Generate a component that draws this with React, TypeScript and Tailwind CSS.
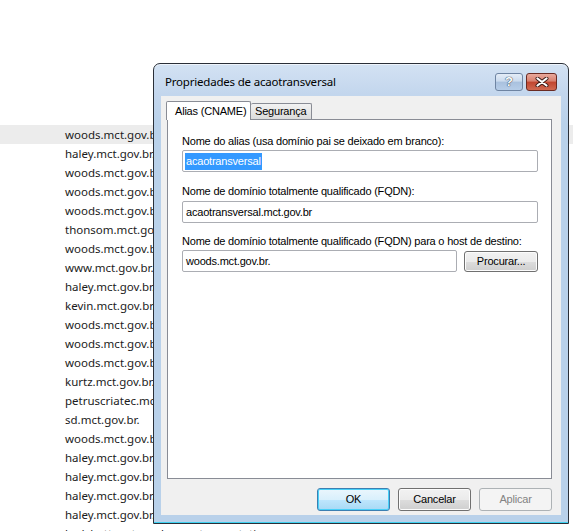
import React from "react";

const HOSTS = [
  "woods.mct.gov.br.",
  "haley.mct.gov.br.",
  "woods.mct.gov.br.",
  "woods.mct.gov.br.",
  "woods.mct.gov.br.",
  "thonsom.mct.gov.br.",
  "woods.mct.gov.br.",
  "www.mct.gov.br.",
  "haley.mct.gov.br.",
  "kevin.mct.gov.br.",
  "woods.mct.gov.br.",
  "woods.mct.gov.br.",
  "woods.mct.gov.br.",
  "kurtz.mct.gov.br.",
  "petruscriatec.mct.gov.br.",
  "sd.mct.gov.br.",
  "woods.mct.gov.br.",
  "haley.mct.gov.br.",
  "haley.mct.gov.br.",
  "haley.mct.gov.br.",
  "haley.mct.gov.br.",
  "hsdchatt.mct.gov.br.acaotransvstatic",
];

const dlgFont = "font-['Liberation_Sans',Arial,sans-serif] text-[11px] tracking-[-0.2px]";
const uiFont = "font-['Noto_Sans','Open_Sans',sans-serif] text-[11.5px]";

function WinButton({
  children,
  primary,
  disabled,
  className = "",
}: {
  children: React.ReactNode;
  primary?: boolean;
  disabled?: boolean;
  className?: string;
}) {
  const base = disabled
    ? "border-[#adb2b5] bg-[#f4f4f4] text-[#838383]"
    : primary
      ? "border-[#3c7fb1] bg-[linear-gradient(#eaf6fd_0%,#d9f0fc_50%,#bee6fd_51%,#a7d9f5_100%)] text-black shadow-[inset_0_0_0_1px_#48d0f8]"
      : "border-[#707070] bg-[linear-gradient(#f2f2f2_0%,#ebebeb_50%,#dddddd_51%,#cfcfcf_100%)] text-black shadow-[inset_0_0_0_1px_#fcfcfc]";
  return (
    <div
      className={`flex items-center justify-center rounded-[3px] border ${base} ${dlgFont} ${className}`}
    >
      {children}
    </div>
  );
}

function Field({ value, selected, className = "" }: { value: string; selected?: boolean; className?: string }) {
  return (
    <div
      className={`flex h-[22px] items-center rounded-[2px] border border-[#abadb3] bg-white pl-[2px] ${dlgFont} ${className}`}
    >
      {selected ? (
        <span className="bg-[#3399ff] px-[1px] leading-[17px] text-white">{value}</span>
      ) : (
        <span className="px-[1px] text-black">{value}</span>
      )}
    </div>
  );
}

export default function App() {
  return (
    <div className="relative h-[531px] w-[573px] overflow-hidden bg-white">
      {/* background list */}
      <div className={`pt-[125px] text-[#1b1b1b] ${uiFont}`}>
        {HOSTS.map((h, i) => (
          <div
            key={i}
            className={`flex h-[19px] items-center whitespace-nowrap pl-[65px] ${i === 0 ? "bg-[#ececec]" : ""}`}
          >
            {h}
          </div>
        ))}
      </div>

      {/* dialog window */}
      <div className="absolute left-[153px] top-[63px] flex h-[461px] w-[416px] flex-col rounded-t-[7px] border border-[#2a2f38] bg-[linear-gradient(#d3e2f3_0px,#c3d6ed_30px,#b9d1ea_60px,#b9d1ea_100%)] shadow-[inset_0_1px_0_#eef4fb,inset_0_-1px_0_#3fd2f1]">
        {/* title bar */}
        <div className="flex h-[32px] items-center justify-between pl-[11px] pr-[11px]">
          <span className={`pt-[3px] tracking-[-0.2px] text-black ${uiFont}`}>Propriedades de acaotransversal</span>
          <div className="flex gap-[3px] pt-[3px]">
            <div className="flex h-[18px] w-[28px] items-center justify-center rounded-[3px] border border-[#6e84a2] bg-[linear-gradient(#e4edf7_0%,#cbdbee_45%,#a9c1de_50%,#b6cde8_100%)]">
              <span className="font-['Liberation_Sans',sans-serif] text-[13px] font-bold leading-none text-white [text-shadow:0_0_1px_#1f2f44,0_0_1px_#1f2f44]">
                ?
              </span>
            </div>
            <div className="flex h-[18px] w-[31px] items-center justify-center rounded-[3px] border border-[#6a2a22] bg-[linear-gradient(#e9a99c_0%,#d8806f_45%,#c1452f_50%,#d06a52_100%)]">
              <svg width="14" height="10" viewBox="0 0 14 10">
                <path d="M2.5 1.5 L11.5 8.5 M11.5 1.5 L2.5 8.5" stroke="#3a1a16" strokeWidth="4" strokeLinecap="round" />
                <path d="M2.5 1.5 L11.5 8.5 M11.5 1.5 L2.5 8.5" stroke="#ffffff" strokeWidth="2.2" strokeLinecap="round" />
              </svg>
            </div>
          </div>
        </div>

        {/* client area */}
        <div className="mx-[7px] flex h-[419px] flex-col bg-[#f0f0f0] pt-[5px]">
          {/* tabs */}
          <div className={`relative z-10 flex items-end pl-[5px] ${dlgFont}`}>
            <div className="-mb-px flex h-[19px] w-[85px] items-center rounded-t-[2px] border border-b-0 border-[#898c95] bg-white pl-[8px] text-black">
              Alias (CNAME)
            </div>
            <div className="flex h-[16px] w-[61px] items-center rounded-t-[2px] border border-b-0 border-l-0 border-[#898c95] bg-[linear-gradient(#f2f2f2,#dcdcdc)] pl-[4px] text-black">
              Segurança
            </div>
          </div>

          {/* tab panel */}
          <div className={`ml-[6px] h-[360px] w-[385px] border border-[#898c95] bg-white pl-[14px] pr-[13px] pt-[13px] text-black ${dlgFont}`}>
            <div className="h-[16px] leading-[16px]">Nome do alias (usa domínio pai se deixado em branco):</div>
            <Field value="acaotransversal" selected className="mt-[1px]" />
            <div className="mt-[11px] h-[16px] leading-[16px]">Nome de domínio totalmente qualificado (FQDN):</div>
            <Field value="acaotransversal.mct.gov.br" className="mt-[2px]" />
            <div className="mt-[10px] h-[16px] leading-[16px]">
              Nome de domínio totalmente qualificado (FQDN) para o host de destino:
            </div>
            <div className="mt-[1px] flex items-center">
              <Field value="woods.mct.gov.br." className="w-[276px]" />
              <WinButton className="ml-[7px] h-[21px] w-[74px]">Procurar...</WinButton>
            </div>
          </div>

          {/* dialog buttons */}
          <div className="mt-[9px] flex justify-end gap-[8px] pr-[9px]">
            <WinButton primary className="h-[23px] w-[73px]">OK</WinButton>
            <WinButton className="h-[23px] w-[73px]">Cancelar</WinButton>
            <WinButton disabled className="h-[23px] w-[73px]">Aplicar</WinButton>
          </div>
        </div>
      </div>
    </div>
  );
}
